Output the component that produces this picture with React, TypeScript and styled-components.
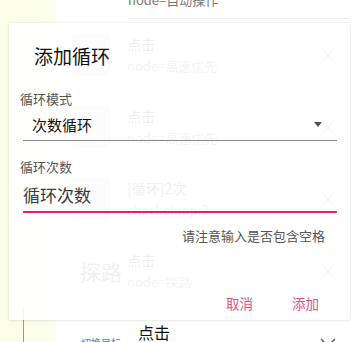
import React from "react";
import styled, { createGlobalStyle } from "styled-components";

const Global = createGlobalStyle`
  html, body { margin: 0; padding: 0; }
  body {
    width: 360px;
    height: 342px;
    overflow: hidden;
    font-family: "Noto Sans CJK SC", "Noto Sans", Roboto, sans-serif;
    background: #fff;
  }
`;

const Page = styled.div`
  position: relative;
  width: 360px;
  height: 342px;
  overflow: hidden;
  background: linear-gradient(to right, #fbfde6 0, #fcfdee 55px, #ffffff 56px);
`;

const List = styled.div`
  display: flex;
  flex-direction: column;
  margin-left: 23px;
  width: 327px;
`;

const Tail = styled.div`
  height: 18px;
  margin-left: 105px;
  border-bottom: 1px solid #ececec;
  color: #777;
  font-size: 13px;
  line-height: 14px;
  overflow: hidden;
  span { display: block; margin-top: -7px; }
`;

const Row = styled.div<{ $edge?: boolean }>`
  height: 72px;
  display: grid;
  grid-template-columns: 49px 1fr 30px;
  align-items: center;
  padding-left: 49px;
  box-sizing: border-box;
  border-left: ${(p) => (p.$edge ? "1px solid #9a9a9a" : "none")};
  border-bottom: 1px solid #eeeeee;
`;

const Thumb = styled.div`
  width: 38px;
  height: 42px;
  border-radius: 4px;
  background: #e2e2e2;
  border: 1px solid #c8c8c8;
  box-sizing: border-box;
`;

const BigWord = styled.div`
  margin-left: 8px;
  font-size: 21px;
  color: #666;
  white-space: nowrap;
`;

const Blue = styled.div`
  margin-left: 8px;
  font-size: 10px;
  color: #3d7bd6;
  white-space: nowrap;
`;

const Texts = styled.div<{ $shift?: number }>`
  display: flex;
  flex-direction: column;
  gap: 4px;
  padding-left: ${(p) => p.$shift ?? 6}px;
`;

const Action = styled.div<{ $dark?: boolean }>`
  font-size: ${(p) => (p.$dark ? 16 : 14)}px;
  line-height: 18px;
  color: ${(p) => (p.$dark ? "#111" : "#555")};
`;

const Detail = styled.div`
  font-size: 13px;
  line-height: 18px;
  color: #888;
`;

const Close = () => (
  <svg width="16" height="16" viewBox="0 0 16 16">
    <path d="M1 1L15 15M15 1L1 15" stroke="#aaa" strokeWidth="1.4" fill="none" />
  </svg>
);

const Chevron = () => (
  <svg width="16" height="10" viewBox="0 0 16 10">
    <path d="M1 1L8 8L15 1" stroke="#555" strokeWidth="1.4" fill="none" />
  </svg>
);

const Dialog = styled.div`
  position: absolute;
  left: 9px;
  top: 23px;
  width: 341px;
  height: 297px;
  box-sizing: border-box;
  background: rgba(255, 255, 255, 0.9);
  box-shadow: 0 0 2px rgba(0, 0, 0, 0.1), 0 1px 3px rgba(0, 0, 0, 0.06);
  display: flex;
  flex-direction: column;
  padding-top: 21px;
`;

const Title = styled.div`
  margin-left: 25px;
  font-size: 19px;
  line-height: 24px;
  color: #111;
`;

const Label = styled.div<{ $top: number }>`
  margin-top: ${(p) => p.$top}px;
  margin-left: 11px;
  font-size: 13px;
  line-height: 18px;
  color: #555;
`;

const Select = styled.div`
  margin-left: 14px;
  width: 314px;
  height: 33px;
  box-sizing: border-box;
  border-bottom: 1px solid #8a8a8a;
  display: flex;
  align-items: center;
  justify-content: space-between;
  padding: 0 15px 0 9px;
  font-size: 15px;
  color: #111;
`;

const Caret = styled.div`
  width: 0;
  height: 0;
  border-left: 4.5px solid transparent;
  border-right: 4.5px solid transparent;
  border-top: 5px solid #555;
  margin-top: 1px;
`;

const Input = styled.div`
  margin-left: 14px;
  width: 314px;
  height: 37px;
  box-sizing: border-box;
  border-bottom: 2px solid #e91e63;
  display: flex;
  align-items: center;
  padding-top: 2px;
  font-size: 17px;
  color: #3a3a3a;
`;

const Helper = styled.div`
  margin-top: 14px;
  align-self: flex-end;
  margin-right: 25px;
  font-size: 13px;
  line-height: 18px;
  color: #555;
`;

const Buttons = styled.div`
  margin-top: 48px;
  display: flex;
  justify-content: flex-end;
  gap: 39px;
  padding-right: 31px;
`;

const Btn = styled.div`
  font-size: 13.5px;
  line-height: 20px;
  color: #e64e84;
`;

export default function App() {
  return (
    <Page>
      <Global />
      <List>
        <Tail>
          <span>node=自动操作</span>
        </Tail>
        <Row>
          <Thumb />
          <Texts>
            <Action>点击</Action>
            <Detail>node=高速优先</Detail>
          </Texts>
          <Close />
        </Row>
        <Row>
          <Thumb />
          <Texts>
            <Action>点击</Action>
            <Detail>node=高速优先</Detail>
          </Texts>
          <Close />
        </Row>
        <Row>
          <Thumb />
          <Texts>
            <Action>[循环]2次</Action>
            <Detail>checkoloop:2</Detail>
          </Texts>
          <Close />
        </Row>
        <Row>
          <BigWord>探路</BigWord>
          <Texts>
            <Action>点击</Action>
            <Detail>node=探路</Detail>
          </Texts>
          <Close />
        </Row>
        <Row $edge>
          <Blue>切换目标</Blue>
          <Texts $shift={16}>
            <Action $dark>点击</Action>
            <Detail>node=切换</Detail>
          </Texts>
          <Chevron />
        </Row>
      </List>
      <Dialog>
        <Title>添加循环</Title>
        <Label $top={22}>循环模式</Label>
        <Select>
          <span>次数循环</span>
          <Caret />
        </Select>
        <Label $top={17}>循环次数</Label>
        <Input>循环次数</Input>
        <Helper>请注意输入是否包含空格</Helper>
        <Buttons>
          <Btn>取消</Btn>
          <Btn>添加</Btn>
        </Buttons>
      </Dialog>
    </Page>
  );
}
